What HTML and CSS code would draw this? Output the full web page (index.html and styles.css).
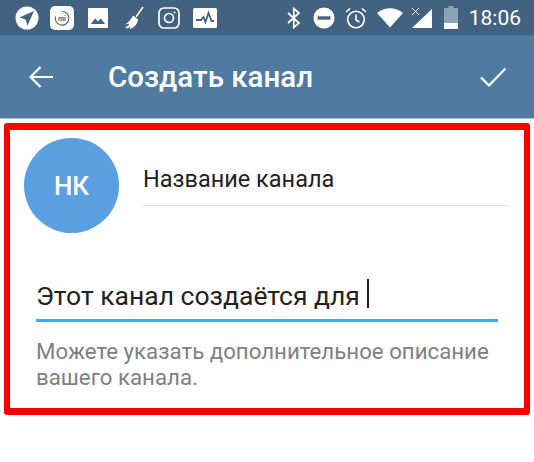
FILE: index.html
```html
<!DOCTYPE html>
<html lang="ru">
<head>
  <meta charset="UTF-8" />
  <title>Создать канал</title>
  <link rel="stylesheet" href="styles.css">
</head>
<body>
  <!-- Status bar -->
  <div class="status-bar">
    <div class="status-left">
      <svg class="ic" width="24" height="24" viewBox="0 0 24 24"><circle cx="12" cy="12" r="11.5" fill="#fff"/><path d="M19 5 4.500 11.500 10.500 13.500 12.500 19.500Z" fill="#42627f"/></svg>
      <svg class="ic ic-mi" width="26" height="26" viewBox="0 0 26 26"><rect x="1" y="1" width="24" height="24" rx="5" fill="#fff"/><path d="M13 6.500a6.800 6.800 0 1 1-6.500 5" fill="none" stroke="#42627f" stroke-width="1.100"/><text x="13" y="15.500" class="mi">mi</text></svg>
      <svg class="ic ic-pic" width="20" height="20" viewBox="0 0 20 20"><rect width="20" height="20" rx="1" fill="#fff"/><path d="M3 16 7 10.500 10 13.500 13 10.500 17 16Z" fill="#42627f"/></svg>
      <svg class="ic ic-broom" width="20" height="24" viewBox="0 0 20 24"><path d="M19 1 12 11" stroke="#fff" stroke-width="1.600" fill="none"/><path d="M9 9.500 14 13.500C13.500 18 10 22 5.500 23L6.500 20.500 3.500 22.500 1 21.500C4 20 5 19 5.500 17.500L1 18.500C4 16.500 7 14 9 9.500Z" fill="#fff"/></svg>
      <svg class="ic" width="22" height="22" viewBox="0 0 22 22" fill="none" stroke="#fff"><rect x="1" y="1" width="20" height="20" rx="5" stroke-width="1.700"/><circle cx="11" cy="11" r="4.500" stroke-width="1.700"/><circle cx="16.500" cy="5.500" r="1" fill="#fff" stroke="none"/></svg>
      <svg class="ic ic-pulse" width="24" height="20" viewBox="0 0 24 20"><rect width="24" height="20" rx="1.500" fill="#fff"/><path d="M3 12H8L10.500 9 12.500 14 15.500 5 18.500 13H21" fill="none" stroke="#42627f" stroke-width="1.800"/></svg>
    </div>
    <div class="status-right">
      <svg class="ic ic-bt" width="14" height="22" viewBox="0 0 14 22" fill="none" stroke="#fff" stroke-width="1.700"><path d="M1 6 12 16 6.800 20.500V1.500L12 6 1 16"/></svg>
      <svg class="ic" width="22" height="22" viewBox="0 0 22 22"><circle cx="11" cy="11" r="10.500" fill="#fff"/><rect x="4.500" y="9.300" width="13" height="3.400" fill="#42627f"/></svg>
      <svg class="ic" width="22" height="22" viewBox="0 0 22 22" fill="none" stroke="#fff" stroke-width="1.600"><circle cx="11" cy="12.500" r="8.300"/><path d="M11 7.500V13L14.500 15M1 5 5 1.500M21 5 17 1.500"/></svg>
      <svg class="ic ic-wifi" width="26" height="20" viewBox="0 0 26 20"><path d="M0 5C7-1.500 19-1.500 26 5L13 19.500Z" fill="#fff"/></svg>
      <svg class="ic" width="22" height="22" viewBox="0 0 22 22"><path d="M21 2V21H1Z" fill="#fff"/><path d="M1 1 8 8M8 1 1 8" stroke="#fff" stroke-width="1" fill="none" opacity=".85"/></svg>
      <svg class="ic ic-battery" width="14" height="23" viewBox="0 0 14 23"><path d="M4.500 0H9.500V2H14V23H0V2H4.500Z" fill="#8ba3b8"/><rect y="17" width="14" height="6" fill="#fff"/></svg>
      <span class="clock">18:06</span>
    </div>
  </div>

  <!-- Toolbar -->
  <header class="toolbar">
    <svg class="back" width="24" height="22" viewBox="0 0 24 22" fill="none" stroke="#fff" stroke-width="2.200"><path d="M24 11H2M11.500 1 1.500 11 11.500 21"/></svg>
    <h1 class="title">Создать канал</h1>
    <svg class="done" width="26" height="20" viewBox="0 0 26 20" fill="none" stroke="#fff" stroke-width="2.200"><path d="M1 10.500 9 18.500 25.500 1.500"/></svg>
  </header>

  <!-- Red frame -->
  <section class="frame">
    <div class="name-row">
      <div class="avatar">НК</div>
      <div class="name-field">Название канала</div>
    </div>
    <div class="desc-field">Этот канал создаётся для <span class="caret"></span></div>
    <p class="hint">Можете указать дополнительное описание вашего канала.</p>
  </section>
</body>
</html>
```

FILE: styles.css
```css
* {
  margin: 0;
  padding: 0;
  box-sizing: border-box;
  font-family: Roboto, sans-serif;
}

body {
  width: 534px;
  height: 462px;
  overflow: hidden;
  background: #fff;
}

.ic {
  display: block;
  flex: none;
}

/* Status bar */
.status-bar {
  height: 35px;
  background: #42627f;
  display: flex;
  justify-content: space-between;
  align-items: center;
  padding: 0 13px 0 15px;
}

.status-left,
.status-right {
  display: flex;
  align-items: center;
}

.status-left {
  gap: 14px;
}

.status-right {
  gap: 10px;
}

.ic-mi {
  margin-left: -4px;
}

.ic-pic {
  margin-left: -1px;
}

.ic-broom {
  margin-left: 2px;
}

.ic-pulse {
  margin-left: -1px;
}

.ic-bt {
  margin-right: 2px;
}

.ic-wifi {
  margin-right: -2px;
}

.ic-battery {
  margin-left: 1px;
}

.mi {
  font-size: 7px;
  font-weight: 700;
  fill: #42627f;
  text-anchor: middle;
}

.clock {
  color: #fff;
  font-size: 21px;
  margin-left: 1px;
}

/* Toolbar */
.toolbar {
  height: 84px;
  background: #4f7ba2;
  border-bottom: 1px solid #b9c6d2;
  display: flex;
  align-items: center;
  padding: 0 28px 0 29px;
  color: #fff;
}

.title {
  flex: 1;
  margin-left: 55px;
  font-size: 29.5px;
  font-weight: 500;
}

/* Frame */
.frame {
  width: 526px;
  height: 292px;
  margin: 4px 0 0 4px;
  border-style: solid;
  border-color: #ff0000;
  border-width: 7px 6px;
  border-radius: 3px;
  padding: 8px 26px 0;
}

.name-row {
  display: flex;
  align-items: flex-start;
  margin-left: -12px;
  margin-right: -12px;
}

.avatar {
  width: 95px;
  height: 95px;
  flex: none;
  border-radius: 50%;
  background: #5a9fdf;
  color: #fff;
  font-size: 26px;
  font-weight: 500;
  display: flex;
  align-items: center;
  justify-content: center;
}

.name-field {
  flex: 1;
  margin: 23px 0 0 24px;
  height: 45px;
  border-bottom: 1px solid #e2e2e2;
  font-size: 23.5px;
  line-height: 36px;
  color: #222;
}

.desc-field {
  margin-top: 43px;
  height: 46px;
  border-bottom: 3px solid #42a8ef;
  font-size: 26.5px;
  line-height: 40px;
  color: #222;
  white-space: pre;
}

.caret {
  display: inline-block;
  width: 2px;
  height: 29px;
  margin-left: 1px;
  background: #222;
  vertical-align: -3px;
}

.hint {
  margin-top: 16px;
  font-size: 22.25px;
  line-height: 26px;
  color: #808080;
}
```
